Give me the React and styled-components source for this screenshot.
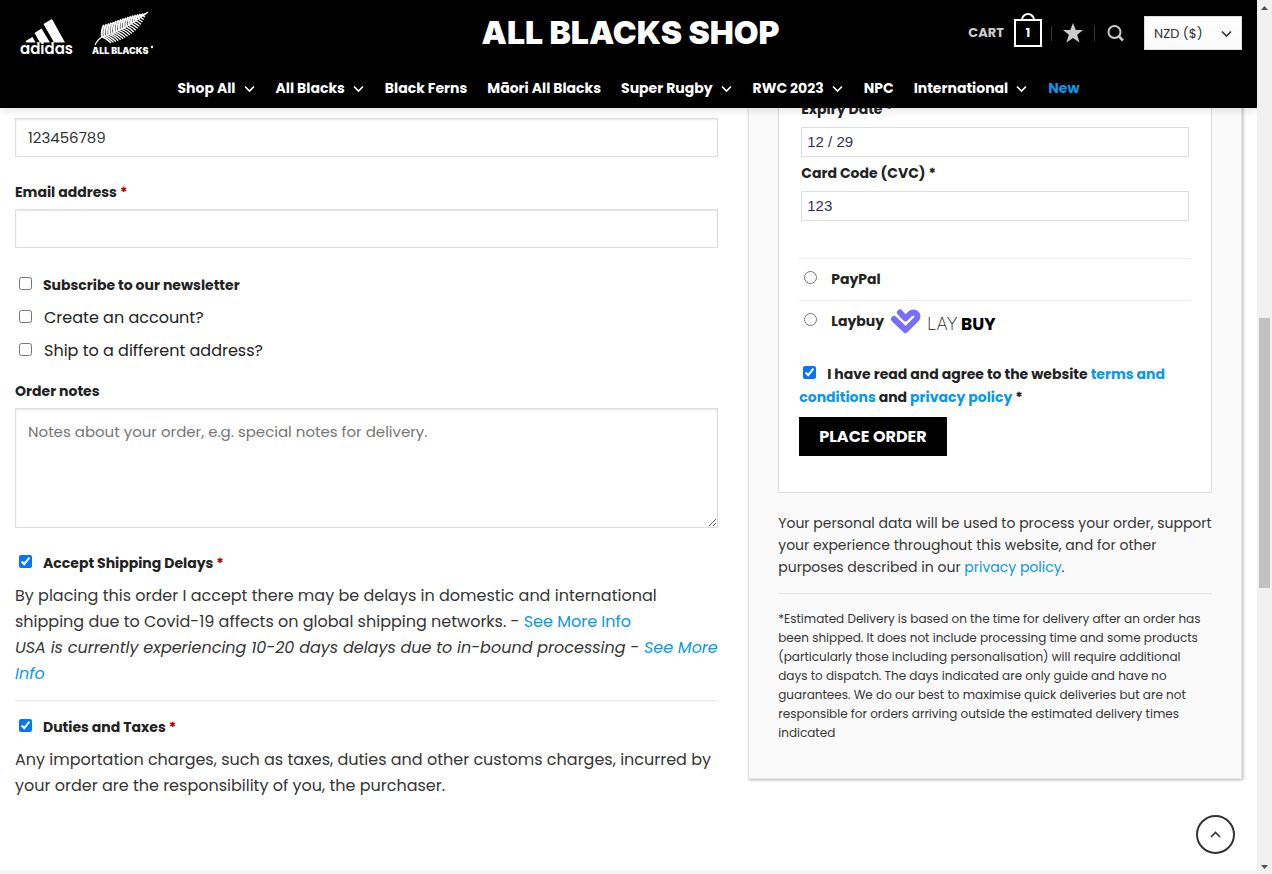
import React from "react";
import styled, { createGlobalStyle } from "styled-components";

const BLUE = "#0a99e4";

const Global = createGlobalStyle`
  *, *::before, *::after { box-sizing: border-box; }
  body {
    margin: 0;
    background: #fff;
    color: #353535;
    font-family: Poppins, Inter, "Liberation Sans", sans-serif;
    font-size: 16px;
    line-height: 26px;
  }
  a { color: ${BLUE}; text-decoration: none; }
  p { margin: 0; }
  button, input, select, textarea { font-family: inherit; border-radius: 0; }
`;

const Shell = styled.div`
  display: grid;
  grid-template-columns: minmax(0, 1fr) 15px;
  height: 100vh;
  overflow: hidden;
`;

const Page = styled.div`
  position: relative;
  overflow: hidden;
`;

const Header = styled.header`
  position: relative;
  z-index: 2;
  height: 108px;
  background: #000;
  color: #fff;
  box-shadow: 1px 1px 10px rgba(0, 0, 0, 0.15);
`;

const TopBar = styled.div`
  display: grid;
  grid-template-columns: 1fr auto 1fr;
  align-items: center;
  height: 66px;
  padding: 0 15px 0 19px;
`;

const Logos = styled.div`
  display: flex;
  align-items: center;
  gap: 15px;
`;

const ShopName = styled.a`
  color: #fff;
  font-family: Inter, sans-serif;
  font-size: 32px;
  font-weight: 900;
  white-space: nowrap;
`;

const Tools = styled.div`
  display: flex;
  align-items: center;
  justify-content: flex-end;
`;

const CartLink = styled.a`
  display: flex;
  align-items: center;
  gap: 10px;
  color: #ccc;
  font-size: 13px;
  font-weight: 700;
`;

const Bag = styled.span`
  position: relative;
  width: 28px;
  height: 28px;
  border: 2px solid #fff;
  color: #fff;
  line-height: 24px;
  font-size: 12px;
  text-align: center;
  &::before {
    content: "";
    position: absolute;
    left: 5px;
    bottom: 24px;
    width: 14px;
    height: 8px;
    border: 2px solid #fff;
    border-bottom: 0;
    border-radius: 8px 8px 0 0;
  }
`;

const ToolLink = styled.a`
  display: flex;
  align-items: center;
  height: 15px;
  padding: 0 ${(p) => p.$pad}px;
  margin-left: ${(p) => (p.$first ? 9 : 0)}px;
  border-left: 1px solid #333;
`;

const SelectWrap = styled.label`
  position: relative;
  display: flex;
  margin-left: 8px;
  svg { position: absolute; right: 9px; top: 11px; pointer-events: none; }
`;

const Currency = styled.select`
  appearance: none;
  width: 98px;
  height: 34px;
  padding: 0 9px;
  border: 1px solid #ddd;
  background: linear-gradient(#fff, #fafafa);
  color: #333;
  font-size: 13px;
`;

const Nav = styled.nav`
  display: flex;
  justify-content: center;
  gap: 20px;
  padding-top: 9px;
  font-size: 14px;
  font-weight: 700;
  white-space: nowrap;
`;

const NavLink = styled.a`
  display: flex;
  align-items: center;
  gap: 7px;
  color: ${(p) => (p.$accent ? BLUE : "#fff")};
`;

const Columns = styled.main`
  display: grid;
  grid-template-columns: 7fr 5fr;
  align-items: start;
`;

const Billing = styled.form`
  padding: 10px 15px 0;
`;

const Label = styled.label`
  display: block;
  color: #222;
  font-size: 14px;
  font-weight: 700;
  line-height: 22px;
  padding-top: 4px;
  padding-bottom: ${(p) => p.$gap || 0}px;
`;

const Required = styled.span`
  color: #b20000;
  font-weight: 700;
`;

const TextInput = styled.input`
  display: block;
  width: 100%;
  height: 39px;
  margin-bottom: 20px;
  padding: 0 12px;
  border: 1px solid #ddd;
  background: #fff;
  color: #333;
  font-size: 15px;
  box-shadow: inset 0 1px 2px rgba(0, 0, 0, 0.1);
`;

const Notes = styled.textarea`
  display: block;
  width: 100%;
  height: 120px;
  padding: 10px 12px;
  border: 1px solid #ddd;
  color: #333;
  font-size: 15px;
  line-height: 26px;
  box-shadow: inset 0 1px 2px rgba(0, 0, 0, 0.1);
  &::placeholder { color: #757575; }
`;

const Tick = styled.input`
  width: 13px;
  height: 13px;
  margin: 0 0 2px;
  accent-color: #0075ff;
`;

const CheckRow = styled.label`
  display: flex;
  align-items: center;
  gap: ${(p) => (p.$strong ? 11 : 12)}px;
  padding-left: 4px;
  height: 33px;
  color: #222;
  font-size: ${(p) => (p.$strong ? 14 : 16)}px;
  font-weight: ${(p) => (p.$strong ? 700 : 400)};
`;

const Checks = styled.div`
  padding-bottom: 9px;
`;

const Consent = styled.section`
  padding-top: ${(p) => p.$top}px;
  ${CheckRow} { margin-bottom: 4px; }
`;

const Rule = styled.hr`
  margin: ${(p) => p.$above}px 0 ${(p) => p.$below}px;
  border: 0;
  border-top: 1px solid #e5e5e5;
`;

const Side = styled.aside`
  margin: -40px 15px 0;
  padding: 0 29px 36px;
  border: 1px solid #e6e6e6;
  background: #fafafa;
  box-shadow: 1px 1px 3px rgba(0, 0, 0, 0.3);
`;

const Payment = styled.form`
  padding: 25px 20px 36px;
  border: 1px solid #ddd;
  border-top: 0;
  background: #fff;
`;

const CardFields = styled.div`
  padding: 0 2px 36px;
`;

const CardInput = styled.input`
  display: block;
  width: 100%;
  height: 30px;
  margin-bottom: 1px;
  padding: 0 5px 2px;
  border: 1px solid #ddd;
  background: #fff;
  color: #32325d;
  font-family: "Liberation Sans", Arial, sans-serif;
  font-size: 15px;
`;

const Method = styled.label`
  display: flex;
  align-items: center;
  height: 42px;
  padding: 0 0 2px 5px;
  border-top: 1px solid #ececec;
  color: #222;
  font-size: 14px;
  font-weight: 700;
  input { width: 13px; height: 13px; margin: 0 14px 2px 0; }
  svg { margin-left: 6px; }
`;

const Agree = styled.label`
  display: block;
  padding: 21px 0 8px;
  color: #222;
  font-size: 14px;
  font-weight: 700;
  line-height: 23px;
  input { margin: 0 11px 0 4px; }
`;

const PlaceOrder = styled.button`
  height: 39px;
  padding: 0 20px;
  border: 0;
  background: #000;
  color: #fff;
  font-size: 16px;
  font-weight: 700;
`;

const Privacy = styled.p`
  padding-top: 19px;
  font-size: 14px;
  line-height: 22px;
`;

const Estimate = styled.p`
  font-size: 12px;
  line-height: 19px;
`;

const ToTop = styled.button`
  position: fixed;
  right: 37px;
  bottom: 20px;
  display: grid;
  place-items: center;
  width: 39px;
  height: 39px;
  padding: 0;
  border: 2px solid #333;
  border-radius: 50%;
  background: #fff;
`;

const BottomShade = styled.div`
  position: absolute;
  left: 0;
  right: 0;
  bottom: 0;
  height: 6px;
  background: linear-gradient(rgba(0, 0, 0, 0), rgba(0, 0, 0, 0.06));
`;

const Scrollbar = styled.div`
  display: grid;
  grid-template-rows: 15px 303fr 270fr 271fr 15px;
  justify-items: center;
  background: #f1f1f1;
`;

const Thumb = styled.div`
  grid-row: 3;
  width: 11px;
  background: #c1c1c1;
`;

const Arrow = styled.svg`
  grid-row: ${(p) => p.$row};
  align-self: center;
`;

const Chevron = ({ color = "#fff", up, size = 13 }) => (
  <svg width={size} height={size} viewBox="0 0 13 13" fill="none" stroke={color} strokeWidth="1.6" aria-hidden="true">
    <path d={up ? "M2 9 6.500 4.500 11 9" : "M2 4.500 6.500 9 11 4.500"} />
  </svg>
);

const AdidasLogo = () => (
  <svg width="58" height="54" viewBox="0 0 58 54" fill="#fff" role="img" aria-label="adidas">
    <path d="M6.500 35 13.500 31 16.500 36.500H7.500Z M15.500 27 22.500 22.500 31 36.500H21Z M24.500 18 33 13 46 36.500H35Z" />
    <text x="1" y="48" fontFamily="Poppins, Inter, sans-serif" fontSize="15" fontWeight="600">adidas</text>
  </svg>
);

// Paired fronds along the fern's spine, shrinking towards the tip.
const fronds = Array.from({ length: 18 }, (_, i) => {
  const t = i / 18;
  const x = 10 + 44 * t;
  const y = 27 - 12 * t - 11 * t * t;
  const size = 1 - t * t * t;
  return {
    upper: `M${x} ${y}Q${x - 1} ${y - 7 * size} ${x + 2} ${y - 12 * size}`,
    lower: `M${x} ${y}Q${x + 4 * size} ${y + 1} ${x + 9 * size} ${y + 6 * size}`,
  };
});

const FernLogo = () => (
  <svg width="64" height="46" viewBox="0 0 64 46" fill="none" stroke="#fff" role="img" aria-label="All Blacks">
    <path d="M3 35Q6 29 10 27Q32 21 56 2" strokeWidth="1.200" />
    {fronds.map((f, i) => (
      <g key={i}>
        <path d={f.upper} strokeWidth="2" />
        <path d={f.lower} strokeWidth="1.300" />
      </g>
    ))}
    <g fill="#fff" stroke="none" fontFamily="Inter, sans-serif">
      <text x="0" y="44" fontSize="9" fontWeight="900">ALL BLACKS</text>
      <circle cx="60" cy="37" r="1.200" />
    </g>
  </svg>
);

const LaybuyLogo = () => (
  <svg width="116" height="28" viewBox="0 0 116 28" fill="none" role="img" aria-label="Laybuy">
    <path d="M4 12 15.500 23 26 12.500Q29 8.500 26 6.500Q23 4.500 20 7L15.500 11.500 10 5.500" stroke="#786dff" strokeWidth="6" strokeLinecap="round" strokeLinejoin="round" />
    <path d="M9 10.500 15.500 17 23 9.500" stroke="#fff" strokeWidth="1.500" />
    <g fontSize="17">
      <text x="37" y="23" fill="#222" fontFamily="Inter, sans-serif" fontWeight="200">LAY</text>
      <text x="71" y="23" fill="#000" fontFamily="Poppins, Inter, sans-serif" fontWeight="700">BUY</text>
    </g>
  </svg>
);

const navItems = [
  ["Shop All", true], ["All Blacks", true], ["Black Ferns"], ["Māori All Blacks"],
  ["Super Rugby", true], ["RWC 2023", true], ["NPC"], ["International", true], ["New"],
];

export default function App() {
  return (
    <Shell>
      <Global />
      <Page>
        <Header>
          <TopBar>
            <Logos><AdidasLogo /><FernLogo /></Logos>
            <ShopName href="#">ALL BLACKS SHOP</ShopName>
            <Tools>
              <CartLink href="#">CART <Bag>1</Bag></CartLink>
              <ToolLink href="#" $first $pad={11} aria-label="Wishlist">
                <svg width="20" height="20" viewBox="0 0 20 20" fill="#ccc"><path d="M10 0 12.700 7H20L14.200 11.800 16.500 19.500 10 15 3.500 19.500 5.800 11.800 0 7H7.300Z" /></svg>
              </ToolLink>
              <ToolLink href="#" $pad={12} aria-label="Search">
                <svg width="17" height="17" viewBox="0 0 17 17" fill="none" stroke="#ccc" strokeWidth="2"><circle cx="7.500" cy="7" r="6" /><path d="M12 11.500 16 15.500" strokeWidth="2.500" /></svg>
              </ToolLink>
              <SelectWrap>
                <Currency aria-label="Currency" defaultValue="NZD"><option value="NZD">NZD ($)</option></Currency>
                <Chevron color="#333" />
              </SelectWrap>
            </Tools>
          </TopBar>
          <Nav>
            {navItems.map(([name, menu]) => (
              <NavLink key={name} href="#" $accent={name === "New"}>{name}{menu && <Chevron />}</NavLink>
            ))}
          </Nav>
        </Header>
        <Columns>
          <Billing>
            <TextInput aria-label="Phone" defaultValue="123456789" />
            <Label htmlFor="email" $gap={6}>Email address <Required>*</Required></Label>
            <TextInput id="email" type="email" />
            <Checks>
              <CheckRow $strong><Tick type="checkbox" />Subscribe to our newsletter</CheckRow>
              <CheckRow><Tick type="checkbox" />Create an account?</CheckRow>
              <CheckRow><Tick type="checkbox" />Ship to a different address?</CheckRow>
            </Checks>
            <Label htmlFor="notes" $gap={6}>Order notes</Label>
            <Notes id="notes" placeholder="Notes about your order, e.g. special notes for delivery." />
            <Consent $top={18}>
              <CheckRow $strong><Tick type="checkbox" defaultChecked /><span>Accept Shipping Delays <Required>*</Required></span></CheckRow>
              <p>By placing this order I accept there may be delays in domestic and international<br />shipping due to Covid-19 affects on global shipping networks. - <a href="#">See More Info</a></p>
              <p><em>USA is currently experiencing 10-20 days delays due to in-bound processing - <a href="#">See More<br />Info</a></em></p>
            </Consent>
            <Rule $above={13} $below={9} />
            <Consent $top={0}>
              <CheckRow $strong><Tick type="checkbox" defaultChecked /><span>Duties and Taxes <Required>*</Required></span></CheckRow>
              <p>Any importation charges, such as taxes, duties and other customs charges, incurred by<br />your order are the responsibility of you, the purchaser.</p>
            </Consent>
          </Billing>
          <Side>
            <Payment>
              <CardFields>
                <Label htmlFor="expiry" $gap={7}>Expiry Date *</Label>
                <CardInput id="expiry" defaultValue="12 / 29" />
                <Label htmlFor="cvc" $gap={7}>Card Code (CVC) *</Label>
                <CardInput id="cvc" defaultValue="123" />
              </CardFields>
              <Method><input type="radio" name="method" />PayPal</Method>
              <Method><input type="radio" name="method" />Laybuy<LaybuyLogo /></Method>
              <Agree>
                <Tick type="checkbox" defaultChecked />I have read and agree to the website <a href="#">terms and<br />conditions</a> and <a href="#">privacy policy</a> *
              </Agree>
              <PlaceOrder type="button">PLACE ORDER</PlaceOrder>
            </Payment>
            <Privacy>Your personal data will be used to process your order, support<br />your experience throughout this website, and for other<br />purposes described in our <a href="#">privacy policy</a>.</Privacy>
            <Rule $above={15} $below={15} />
            <Estimate>
              *Estimated Delivery is based on the time for delivery after an order has<br />
              been shipped. It does not include processing time and some products<br />
              (particularly those including personalisation) will require additional<br />
              days to dispatch. The days indicated are only guide and have no<br />
              guarantees. We do our best to maximise quick deliveries but are not<br />
              responsible for orders arriving outside the estimated delivery times<br />
              indicated
            </Estimate>
          </Side>
        </Columns>
        <BottomShade />
        <ToTop aria-label="Back to top"><Chevron color="#333" up /></ToTop>
      </Page>
      <Scrollbar aria-hidden="true">
        <Arrow $row={1} width="7" height="4" viewBox="0 0 7 4" fill="#505050"><path d="M3.500 0 7 4H0Z" /></Arrow>
        <Thumb />
        <Arrow $row={5} width="7" height="4" viewBox="0 0 7 4" fill="#505050"><path d="M0 0H7L3.500 4Z" /></Arrow>
      </Scrollbar>
    </Shell>
  );
}
